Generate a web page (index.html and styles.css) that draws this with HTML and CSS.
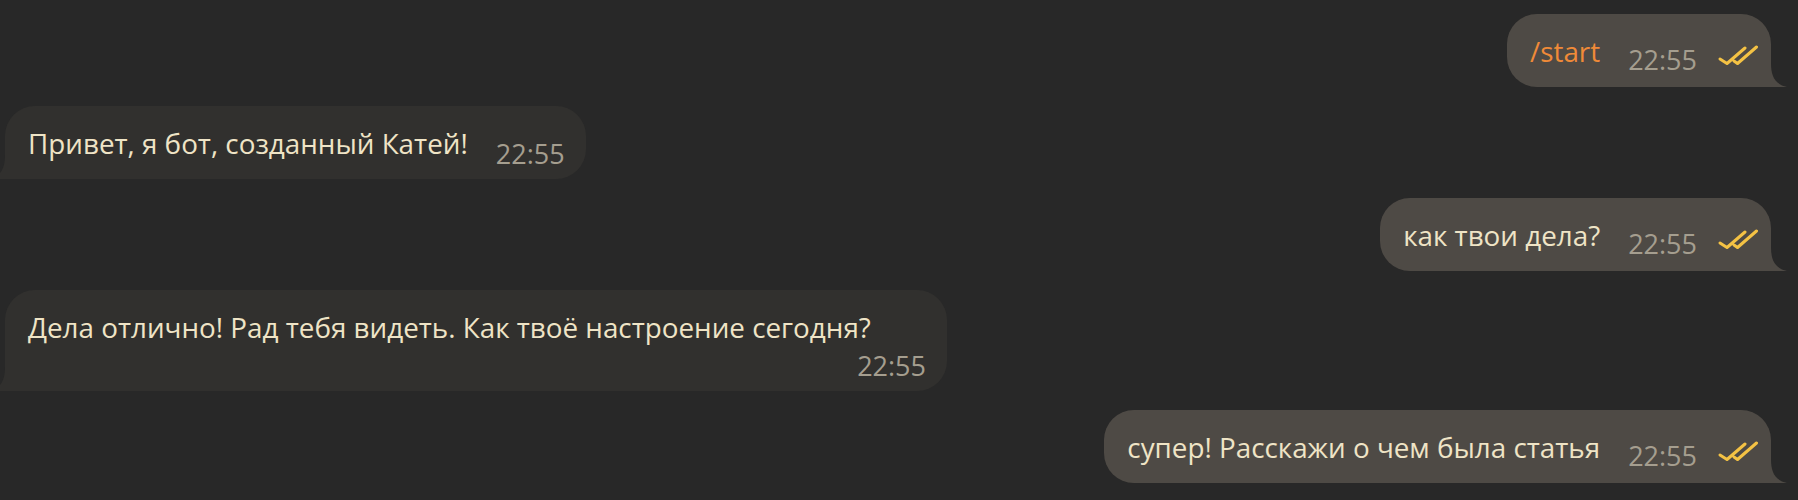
FILE: index.html
```html
<!DOCTYPE html>
<html lang="ru">
<head>
<meta charset="utf-8">
<title>Chat</title>
<link rel="stylesheet" href="styles.css">
</head>
<body>
<div class="chat">
  <div class="row out">
    <div class="bubble">
      <span class="text cmd">/start</span>
      <span class="meta"><span class="time">22:55</span><svg class="checks" width="40" height="20" viewBox="0 0 40 20"><path d="M2 14 L9 18.5 L27 3 M16 16 L19.5 18.5 L38.5 2"/></svg></span>
      <svg class="tail" width="16" height="24" viewBox="0 0 16 24"><path d="M0 0 C0 12 3 21 16 24 L0 24 Z"/></svg>
    </div>
  </div>
  <div class="row in">
    <div class="bubble">
      <span class="text">Привет, я бот, созданный Катей!</span>
      <span class="meta"><span class="time">22:55</span></span>
      <svg class="tail" width="16" height="24" viewBox="0 0 16 24"><path d="M16 0 C16 12 13 21 0 24 L16 24 Z"/></svg>
    </div>
  </div>
  <div class="row out">
    <div class="bubble">
      <span class="text">как твои дела?</span>
      <span class="meta"><span class="time">22:55</span><svg class="checks" width="40" height="20" viewBox="0 0 40 20"><path d="M2 14 L9 18.5 L27 3 M16 16 L19.5 18.5 L38.5 2"/></svg></span>
      <svg class="tail" width="16" height="24" viewBox="0 0 16 24"><path d="M0 0 C0 12 3 21 16 24 L0 24 Z"/></svg>
    </div>
  </div>
  <div class="row in">
    <div class="bubble">
      <span class="text">Дела отлично! Рад тебя видеть. Как твоё настроение сегодня?</span>
      <span class="meta"><span class="time">22:55</span></span>
      <svg class="tail" width="16" height="24" viewBox="0 0 16 24"><path d="M16 0 C16 12 13 21 0 24 L16 24 Z"/></svg>
    </div>
  </div>
  <div class="row out">
    <div class="bubble">
      <span class="text">супер! Расскажи о чем была статья</span>
      <span class="meta"><span class="time">22:55</span><svg class="checks" width="40" height="20" viewBox="0 0 40 20"><path d="M2 14 L9 18.5 L27 3 M16 16 L19.5 18.5 L38.5 2"/></svg></span>
      <svg class="tail" width="16" height="24" viewBox="0 0 16 24"><path d="M0 0 C0 12 3 21 16 24 L0 24 Z"/></svg>
    </div>
  </div>
</div>
</body>
</html>
```

FILE: styles.css
```css
html, body {
  margin: 0;
  padding: 0;
  background: #282828;
  height: 100%;
  overflow: hidden;
}

body {
  font-family: "Open Sans", "Noto Sans", sans-serif;
  color: #efe4c6;
}

.chat {
  display: flex;
  flex-direction: column;
  gap: 19px;
  padding: 14px 27px 0 5px;
}

.row {
  display: flex;
}

.row.out {
  justify-content: flex-end;
}

.row.in {
  justify-content: flex-start;
}

.bubble {
  position: relative;
  box-sizing: border-box;
  max-width: 942px;
  display: flex;
  flex-wrap: wrap;
  align-items: flex-end;
  column-gap: 28px;
  padding: 18px 13px 17px 23px;
  border-radius: 30px;
}

.row.out .bubble {
  background: #4e4a45;
  border-bottom-right-radius: 0;
}

.row.in .bubble {
  background: #31302e;
  border-bottom-left-radius: 0;
  padding-right: 21px;
}

.text {
  font-size: 27.8px;
  line-height: 38px;
  white-space: nowrap;
}

.text.cmd {
  color: #f08a38;
}

.meta {
  margin-left: auto;
  margin-top: 11px;
  font-size: 27px;
  line-height: 17px;
  white-space: nowrap;
  color: #a59e8f;
}

.checks {
  margin-left: 21px;
  margin-bottom: 5px;
  vertical-align: baseline;
  fill: none;
  stroke: #f4c244;
  stroke-width: 3;
  stroke-linecap: round;
  stroke-linejoin: round;
}

.tail {
  position: absolute;
  bottom: 0;
}

.row.out .tail {
  right: -16px;
  fill: #4e4a45;
}

.row.in .tail {
  left: -16px;
  fill: #31302e;
}
```
